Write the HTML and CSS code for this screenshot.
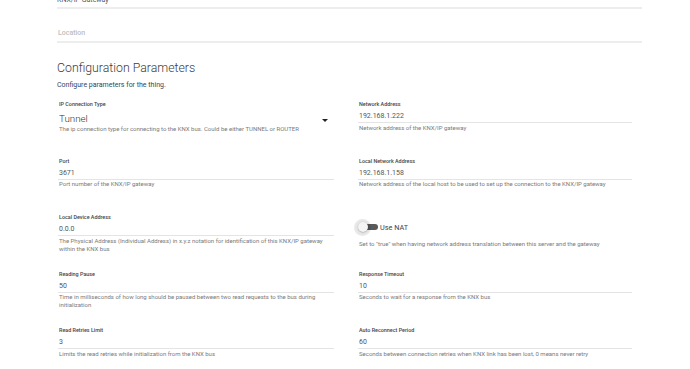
FILE: index.html
```html
<!DOCTYPE html>
<html>
<head>
<meta charset="utf-8">
<link rel="stylesheet" href="styles.css">
</head>
<body>
<div class="page">
  <div class="top-field top-value">KNX/IP Gateway</div>
  <div class="top-field loc">Location</div>
  <h2 class="heading">Configuration Parameters</h2>
  <p class="subtitle">Configure parameters for the thing.</p>
  <div class="grid">
    <div class="field">
      <div class="label">IP Connection Type</div>
      <div class="select"><span class="select-value">Tunnel</span><span class="caret"></span></div>
      <div class="desc">The ip connection type for connecting to the KNX bus. Could be either TUNNEL or ROUTER</div>
    </div>
    <div class="field">
      <div class="label">Network Address</div>
      <div class="input">192.168.1.222</div>
      <div class="desc">Network address of the KNX/IP gateway</div>
    </div>
    <div class="field">
      <div class="label">Port</div>
      <div class="input">3671</div>
      <div class="desc">Port number of the KNX/IP gateway</div>
    </div>
    <div class="field">
      <div class="label">Local Network Address</div>
      <div class="input">192.168.1.158</div>
      <div class="desc">Network address of the local host to be used to set up the connection to the KNX/IP gateway</div>
    </div>
    <div class="field">
      <div class="label">Local Device Address</div>
      <div class="input">0.0.0</div>
      <div class="desc">The Physical Address (Individual Address) in x.y.z notation for identification of this KNX/IP gateway within the KNX bus</div>
    </div>
    <div class="field">
      <div class="toggle-row">
        <span class="toggle"><span class="track"></span><span class="halo"></span><span class="knob"></span></span>
        <span class="toggle-label">Use NAT</span>
      </div>
      <div class="desc nat-desc">Set to "true" when having network address translation between this server and the gateway</div>
    </div>
    <div class="field">
      <div class="label">Reading Pause</div>
      <div class="input">50</div>
      <div class="desc">Time in milliseconds of how long should be paused between two read requests to the bus during initialization</div>
    </div>
    <div class="field">
      <div class="label">Response Timeout</div>
      <div class="input">10</div>
      <div class="desc">Seconds to wait for a response from the KNX bus</div>
    </div>
    <div class="field">
      <div class="label">Read Retries Limit</div>
      <div class="input">3</div>
      <div class="desc">Limits the read retries while initialization from the KNX bus</div>
    </div>
    <div class="field">
      <div class="label">Auto Reconnect Period</div>
      <div class="input">60</div>
      <div class="desc">Seconds between connection retries when KNX link has been lost, 0 means never retry</div>
    </div>
  </div>
</div>
</body>
</html>
```
FILE: styles.css
```css
html, body {
  margin: 0;
  padding: 0;
  background: #fff;
  font-family: Roboto, "Noto Sans", sans-serif;
  overflow: hidden;
}

.page {
  margin-top: -5px;
  margin-left: 57px;
  width: 585px;
}

.top-field {
  font-size: 7px;
  line-height: 10px;
  padding-bottom: 1.5px;
  border-bottom: 2px solid #ededed;
}

.top-value {
  color: #555;
}

.top-field.loc {
  margin-top: 19.5px;
  padding-bottom: 3px;
  padding-left: 1px;
  font-weight: 500;
  color: #bdbdbd;
}

.heading {
  margin: 17px 0 0;
  font-size: 12.3px;
  line-height: 16px;
  font-weight: 300;
  color: #3c3c3c;
}

.subtitle {
  margin: 5px 0 0;
  font-size: 7px;
  line-height: 8px;
  color: #34465a;
}

.grid {
  margin-top: 11px;
  display: grid;
  grid-template-columns: 277px 275px;
  column-gap: 23px;
  grid-auto-rows: 56.6px;
}

.field {
  padding-left: 2px;
}

.label {
  font-size: 5.4px;
  line-height: 8px;
  font-weight: 500;
  color: #444;
}

.input {
  margin-top: 3px;
  margin-left: -1px;
  padding-left: 1px;
  font-size: 7px;
  line-height: 10px;
  color: #555;
  padding-bottom: 1px;
  border-bottom: 1px solid #e4e4e4;
}

.desc {
  margin-top: 0.5px;
  font-size: 6px;
  line-height: 8px;
  color: #7a7a7a;
}

.select {
  margin-top: 5px;
  display: flex;
  align-items: center;
  justify-content: space-between;
  line-height: 12px;
}

.select-value {
  font-size: 9.8px;
  font-weight: 300;
  color: #333;
}

.caret {
  width: 0;
  height: 0;
  border-left: 3px solid transparent;
  border-right: 3px solid transparent;
  border-top: 3.5px solid #222;
  margin-right: 6px;
  margin-top: 2px;
}

.field .select + .desc {
  margin-top: 0;
}

.toggle-row {
  margin-top: 9px;
  height: 10px;
  display: flex;
  align-items: center;
}

.toggle {
  position: relative;
  width: 21px;
  height: 10px;
  margin-left: -2px;
}

.track {
  position: absolute;
  left: 3px;
  top: 2px;
  width: 18px;
  height: 6px;
  border-radius: 3px;
  background: #5a5a5a;
}

.halo {
  position: absolute;
  left: -3px;
  top: -3.5px;
  width: 17px;
  height: 17px;
  border-radius: 50%;
  background: rgba(0, 0, 0, 0.09);
}

.knob {
  position: absolute;
  left: 1px;
  top: 0;
  width: 10px;
  height: 10px;
  border-radius: 50%;
  background: #f5f5f5;
  box-shadow: 0 0.5px 1.5px rgba(0, 0, 0, 0.35);
}

.toggle-label {
  margin-left: 2px;
  font-size: 7.3px;
  color: #444;
}

.nat-desc {
  margin-top: 8px;
}
```
